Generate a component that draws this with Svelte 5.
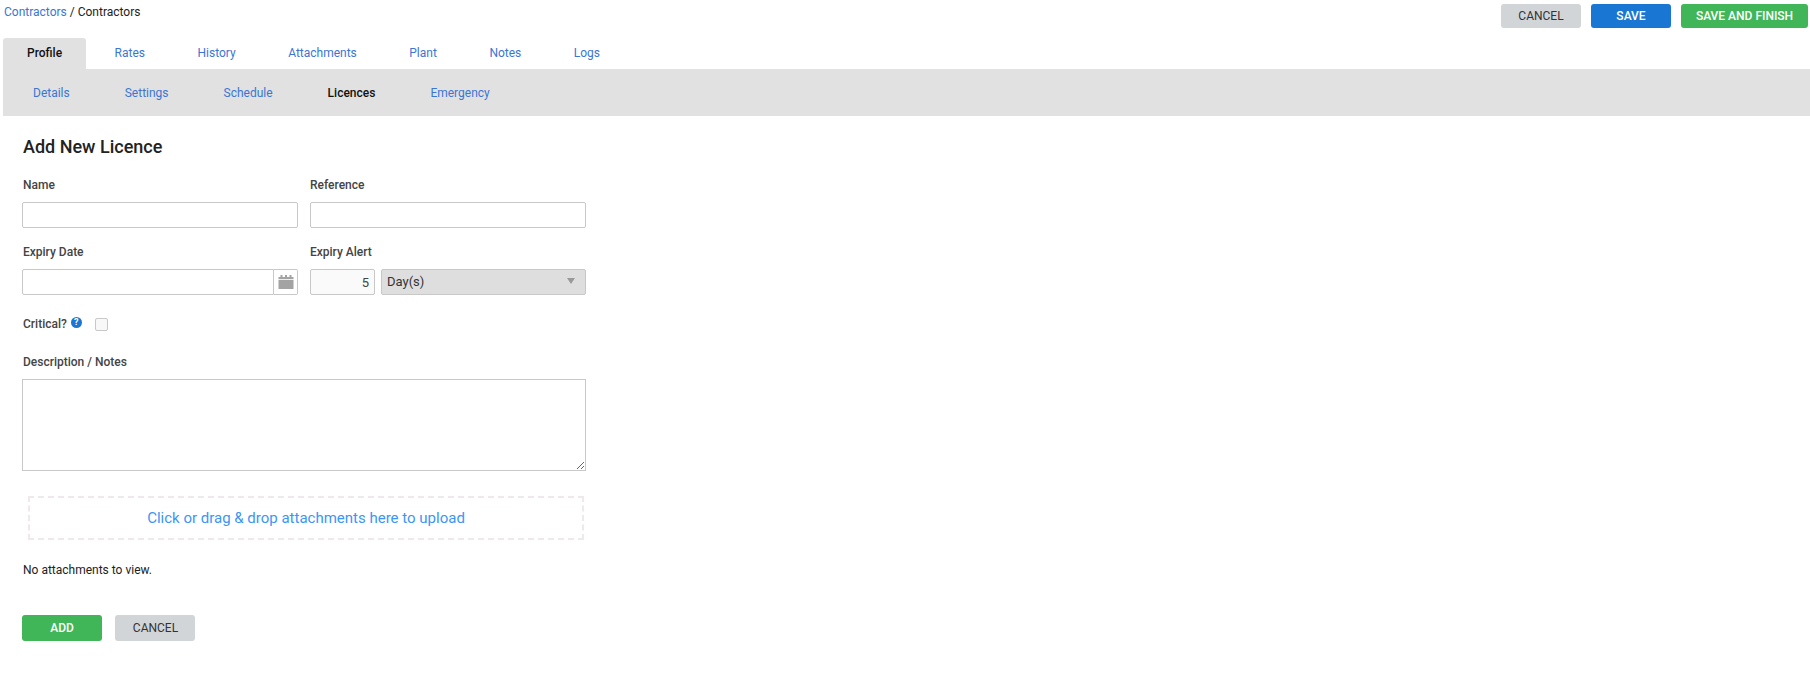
<script>
    const tabs = ['Profile', 'Rates', 'History', 'Attachments', 'Plant', 'Notes', 'Logs'];
    const subTabs = ['Details', 'Settings', 'Schedule', 'Licences', 'Emergency'];
</script>

<div class="top">
    <div class="crumbs"><a href="#top">Contractors</a> / Contractors</div>
    <div class="actions">
        <button class="btn grey">CANCEL</button>
        <button class="btn blue">SAVE</button>
        <button class="btn green wide">SAVE AND FINISH</button>
    </div>
</div>

<nav class="tabs">
    {#each tabs as tab, i}
        <a href="#top" class:active={i === 0}>{tab}</a>
    {/each}
</nav>

<nav class="subtabs">
    {#each subTabs as tab}
        <a href="#top" class:active={tab === 'Licences'}>{tab}</a>
    {/each}
</nav>

<main class="form">
    <h2>Add New Licence</h2>

    <div class="row">
        <div class="field">
            <label for="name">Name</label>
            <input id="name" type="text" />
        </div>
        <div class="field">
            <label for="reference">Reference</label>
            <input id="reference" type="text" />
        </div>
    </div>

    <div class="row second">
        <div class="field">
            <label for="expiry">Expiry Date</label>
            <div class="date">
                <input id="expiry" type="text" />
                <span class="addon">
                    <svg width="16" height="14" viewBox="0 0 16 14" fill="#a3a3a3">
                        <rect x="0.5" y="5" width="15" height="9" />
                        <rect x="0.5" y="2" width="15" height="2.2" />
                        <rect x="2.5" y="0" width="2" height="3" />
                        <rect x="7" y="0" width="2" height="3" />
                        <rect x="11.5" y="0" width="2" height="3" />
                    </svg>
                </span>
            </div>
        </div>
        <div class="field">
            <label for="alert">Expiry Alert</label>
            <div class="alert">
                <input id="alert" class="num" type="text" value="5" />
                <div class="select">
                    <span>Day(s)</span>
                    <i class="caret"></i>
                </div>
            </div>
        </div>
    </div>

    <div class="critical">
        <span class="bold">Critical?</span>
        <span class="help">?</span>
        <span class="check"></span>
    </div>

    <label class="notes-label" for="notes">Description / Notes</label>
    <textarea id="notes"></textarea>

    <div class="drop">Click or drag &amp; drop attachments here to upload</div>

    <p class="none">No attachments to view.</p>

    <div class="form-actions">
        <button class="btn green tall">ADD</button>
        <button class="btn grey tall">CANCEL</button>
    </div>
</main>

<style>
    :global(body) {
        margin: 0;
        background: #fff;
        font-family: Roboto, "Liberation Sans", sans-serif;
        font-size: 12px;
        color: #222;
    }

    a {
        color: #3a76d2;
        text-decoration: none;
    }

    .top {
        display: flex;
        justify-content: space-between;
        height: 38px;
        padding: 3px 2px 0 4px;
        box-sizing: border-box;
    }

    .crumbs {
        line-height: 18px;
    }

    .actions {
        display: flex;
        gap: 10px;
        margin-top: 1px;
    }

    .btn {
        width: 80px;
        height: 24px;
        padding: 0;
        border: 0;
        border-radius: 3px;
        font-family: inherit;
        font-size: 12px;
        font-weight: 500;
    }

    .btn.wide {
        width: 127px;
    }

    .btn.tall {
        height: 26px;
    }

    .grey {
        background: #d1d5d8;
        color: #333;
    }

    .btn.grey {
        font-weight: 400;
    }

    .blue {
        background: #1976d2;
        color: #fff;
    }

    .green {
        background: #40b659;
        color: #fff;
    }

    .tabs {
        display: flex;
        height: 31px;
        margin-left: 3px;
    }

    .tabs a {
        padding: 0 24px;
        margin-right: 4.5px;
        line-height: 31px;
        font-size: 12px;
        border-radius: 3px 3px 0 0;
    }

    .tabs a.active {
        background: #e1e1e1;
        color: #111;
        font-weight: 500;
    }

    .subtabs {
        display: flex;
        gap: 55px;
        height: 47px;
        margin-left: 3px;
        padding-left: 30px;
        background: #e1e1e1;
        font-size: 12px;
        line-height: 48px;
    }

    .subtabs a.active {
        color: #111;
        font-weight: 500;
    }

    .form {
        width: 564px;
        padding-left: 22px;
    }

    h2 {
        margin: 21px 0 0 1px;
        font-size: 18px;
        font-weight: 500;
        line-height: 20px;
        color: #222;
    }

    .row {
        display: grid;
        grid-template-columns: 276px 276px;
        gap: 12px;
        margin-top: 20px;
    }

    .row.second {
        margin-top: 16px;
    }

    label,
    .bold {
        display: block;
        margin-left: 1px;
        font-size: 12px;
        font-weight: 500;
        line-height: 16px;
        color: #444;
    }

    .field + .field label {
        margin-left: 0;
    }

    input,
    textarea {
        display: block;
        box-sizing: border-box;
        width: 100%;
        margin: 0;
        border: 1px solid #c8c8c8;
        border-radius: 2px;
        background: #fff;
        font-family: inherit;
        font-size: 13px;
        outline: none;
    }

    .field input {
        height: 26px;
        margin-top: 9px;
    }

    .date {
        display: flex;
        margin-top: 9px;
    }

    .field .date input {
        flex: 1;
        margin-top: 0;
        border-radius: 2px 0 0 2px;
    }

    .addon {
        display: flex;
        align-items: center;
        justify-content: center;
        box-sizing: border-box;
        width: 24px;
        height: 26px;
        border: 1px solid #c8c8c8;
        border-left: 0;
        border-radius: 0 2px 2px 0;
    }

    .alert {
        display: flex;
        gap: 6px;
        margin-top: 9px;
    }

    .field .alert .num {
        width: 65px;
        margin-top: 0;
        padding-right: 5px;
        background: #fafafa;
        text-align: right;
        color: #444;
    }

    .select {
        display: flex;
        align-items: center;
        justify-content: space-between;
        box-sizing: border-box;
        width: 205px;
        height: 26px;
        padding: 0 10px 0 5px;
        border: 1px solid #c8c8c8;
        border-radius: 2px;
        background: #dedede;
        color: #333;
        font-size: 13px;
    }

    .select span {
        margin-top: -2px;
    }

    .caret {
        width: 0;
        height: 0;
        margin-bottom: 3px;
        border-left: 4px solid transparent;
        border-right: 4px solid transparent;
        border-top: 6px solid #999;
    }

    .critical {
        display: flex;
        align-items: center;
        height: 16px;
        margin: 21px 0 0;
    }

    .help {
        width: 11px;
        height: 11px;
        margin: -4px 0 0 4px;
        border-radius: 50%;
        background: #1976d2;
        color: #fff;
        font-size: 9px;
        font-weight: 700;
        line-height: 11px;
        text-align: center;
    }

    .check {
        box-sizing: border-box;
        width: 13px;
        height: 13px;
        margin: 1px 0 0 13px;
        border: 1px solid #c8c8c8;
        border-radius: 2px;
        background: #f8f8f8;
    }

    .notes-label {
        margin-top: 22px;
    }

    textarea {
        height: 92px;
        margin-top: 9px;
        border-radius: 0;
    }

    .drop {
        box-sizing: border-box;
        width: 556px;
        height: 44px;
        margin: 25px 0 0 6px;
        border: 2px dashed #efe8ec;
        font-size: 15px;
        line-height: 40px;
        text-align: center;
        color: #3b96f5;
    }

    .none {
        margin: 21px 0 0 1px;
        font-size: 12px;
        line-height: 18px;
    }

    .form-actions {
        display: flex;
        gap: 13px;
        margin-top: 36px;
    }

    .form-actions .grey {
        padding-left: 1px;
    }
</style>
